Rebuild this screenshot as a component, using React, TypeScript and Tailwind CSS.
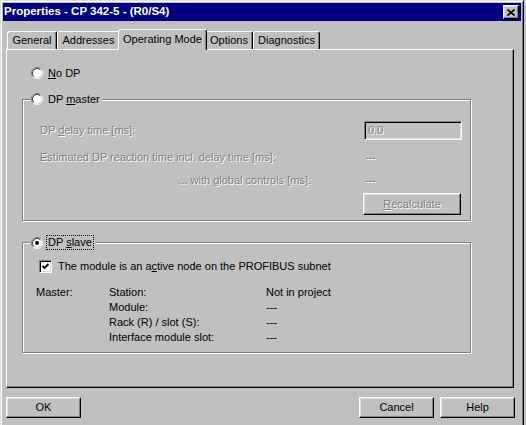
import React from "react";

const RAISED =
  "bg-[#c0c0c0] border border-t-white border-l-white border-r-black border-b-black shadow-[inset_-1px_-1px_0_#808080,inset_1px_1px_0_#dfdfdf]";
const SUNKEN =
  "border border-t-[#808080] border-l-[#808080] border-r-white border-b-white shadow-[inset_1px_1px_0_#000,inset_-1px_-1px_0_#dfdfdf]";
const ETCHED = "border border-[#808080] shadow-[inset_1px_1px_0_#fff,1px_1px_0_#fff]";
const DIM = "text-[#808080] [text-shadow:1px_1px_0_#fff]";

const Radio = ({ checked }: { checked?: boolean }) => (
  <svg width="12" height="12" viewBox="0 0 12 12" className="shrink-0">
    <circle cx="6" cy="6" r="4.5" fill="#fff" />
    <path d="M2.11 9.89A5.5 5.5 0 0 1 9.89 2.11" stroke="#808080" fill="none" />
    <path d="M9.89 2.11A5.5 5.5 0 0 1 2.11 9.89" stroke="#fff" fill="none" />
    <path d="M2.82 9.18A4.5 4.5 0 0 1 9.18 2.82" stroke="#404040" fill="none" />
    <path d="M9.18 2.82A4.5 4.5 0 0 1 2.82 9.18" stroke="#dfdfdf" fill="none" />
    {checked && <circle cx="6" cy="6" r="2" fill="#000" />}
  </svg>
);

const Check = () => (
  <div className={`w-[13px] h-[13px] bg-white shrink-0 ${SUNKEN}`}>
    <svg width="11" height="11" viewBox="0 0 11 11">
      <path d="M2.5 5 L4.5 7 L8.5 3" stroke="#000" strokeWidth="1.8" fill="none" />
    </svg>
  </div>
);

const Tab = ({ label, w, active }: { label: string; w: string; active?: boolean }) => (
  <div
    className={`${w} flex items-center justify-center rounded-t-[3px] bg-[#c0c0c0] border-t border-l border-r border-t-white border-l-white border-r-black shadow-[inset_-1px_0_0_#808080] ${
      active ? "h-[21px] mx-[-2px] mb-[-1px] relative z-10 pb-[2px]" : "h-[18px]"
    }`}
  >
    {label}
  </div>
);

const Button = ({ children, cls }: { children: React.ReactNode; cls: string }) => (
  <div className={`${cls} flex items-center justify-center ${RAISED}`}>{children}</div>
);

export default function App() {
  return (
    <div className="w-[526px] h-[425px] bg-[#c0c0c0] font-['Liberation_Sans',Arial,sans-serif] text-[11px] text-black leading-none overflow-hidden">
      <div className="w-[524px] h-[425px] p-[2px] border-t border-l border-r border-t-[#dfdfdf] border-l-[#dfdfdf] border-r-black shadow-[inset_1px_1px_0_#fff,inset_-1px_0_0_#808080]">
        {/* title bar */}
        <div className="h-[18px] bg-[#000080] flex items-center justify-between pl-[1px] pr-[2px]">
          <span className="text-white font-bold text-[11.5px]">Properties - CP 342-5 - (R0/S4)</span>
          <div className={`w-[16px] h-[14px] flex items-center justify-center ${RAISED}`}>
            <svg width="8" height="7" viewBox="0 0 8 7">
              <path d="M0.5 0.5L7.5 6.5M7.5 0.5L0.5 6.5" stroke="#000" strokeWidth="1.6" />
            </svg>
          </div>
        </div>

        <div className="ml-[3px] w-[509px]">
          {/* tabs */}
          <div className="mt-[8px] h-[20px] flex items-end pl-[1px]">
            <Tab label="General" w="w-[50px]" />
            <Tab label="Addresses" w="w-[63px]" />
            <Tab label="Operating Mode" w="w-[89px]" active />
            <Tab label="Options" w="w-[48px]" />
            <Tab label="Diagnostics" w="w-[67px]" />
          </div>

          {/* panel */}
          <div className="w-[508px] h-[339px] border border-t-white border-l-white border-r-black border-b-black shadow-[inset_-1px_-1px_0_#808080]">
            <div className="mt-[17px] ml-[24px] h-[12px] flex items-center gap-[5px]">
              <Radio />
              <span>
                <u>N</u>o DP
              </span>
            </div>

            {/* DP master */}
            <div className={`relative mt-[20px] ml-[15px] w-[449px] h-[122px] ${ETCHED}`}>
              <div className="absolute left-[7px] top-[-7px] flex items-center gap-[5px] bg-[#c0c0c0] pl-[1px] pr-[2px] h-[12px]">
                <Radio />
                <span>
                  DP <u>m</u>aster
                </span>
              </div>
              <div className={`pt-[21px] pl-[17px] ${DIM}`}>
                <div className="h-[19px] flex items-center">
                  <span className="w-[324px]">
                    DP <u>d</u>elay time [ms]:
                  </span>
                  <div className={`w-[98px] h-[19px] flex items-center pl-[3px] ${SUNKEN}`}>0.0</div>
                </div>
                <div className="mt-[10px] h-[15px] flex items-center">
                  <span className="w-[325px]">Estimated DP reaction time incl. delay time [ms]:</span>
                  <span>---</span>
                </div>
                <div className="mt-[8px] h-[15px] flex items-center">
                  <span className="w-[271px] text-right">... with global controls [ms]:</span>
                  <span className="ml-[54px]">---</span>
                </div>
                <Button cls="mt-[5px] ml-[323px] w-[98px] h-[22px]">
                  <span>
                    <u>R</u>ecalculate
                  </span>
                </Button>
              </div>
            </div>

            {/* DP slave */}
            <div className={`relative mt-[21px] ml-[15px] w-[449px] h-[111px] ${ETCHED}`}>
              <div className="absolute left-[7px] top-[-8px] flex items-center gap-[3px] bg-[#c0c0c0] pl-[1px] pr-[2px] h-[15px]">
                <Radio checked />
                <span className="border border-dotted border-black px-[1px] h-[15px] flex items-center">
                  <span>
                    DP <u>s</u>lave
                  </span>
                </span>
              </div>
              <div className="pt-[17px] pl-[13px]">
                <div className="pl-[3px] flex items-center gap-[6px] h-[13px]">
                  <Check />
                  <span>
                    The module is an a<u>c</u>tive node on the PROFIBUS subnet
                  </span>
                </div>
                <div className="mt-[12px] grid grid-cols-[73px_157px_1fr] auto-rows-[15px] items-center">
                  <span>Master:</span>
                  <span>Station:</span>
                  <span>Not in project</span>
                  <span />
                  <span>Module:</span>
                  <span>---</span>
                  <span />
                  <span>Rack (R) / slot (S):</span>
                  <span>---</span>
                  <span />
                  <span>Interface module slot:</span>
                  <span>---</span>
                </div>
              </div>
            </div>
          </div>

          {/* footer buttons */}
          <div className="mt-[9px] flex items-center">
            <Button cls="w-[75px] h-[21px]">OK</Button>
            <div className="ml-auto flex gap-[6px]">
              <Button cls="w-[75px] h-[21px]">Cancel</Button>
              <Button cls="w-[75px] h-[21px]">Help</Button>
            </div>
          </div>
        </div>
      </div>
    </div>
  );
}
